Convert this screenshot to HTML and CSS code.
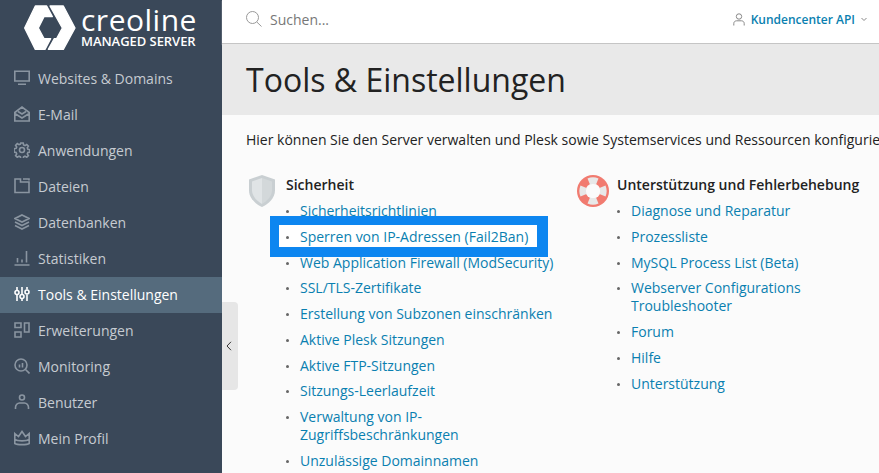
FILE: index.html
```html
<!DOCTYPE html>
<html lang="de">
<head>
<meta charset="utf-8">
<title>Tools &amp; Einstellungen</title>
<link rel="stylesheet" href="styles.css">
</head>
<body>
<div class="shell">
  <aside class="sidebar">
    <div class="brand">
      <svg class="brand-mark" width="60" height="55" viewBox="0 0 180 165"><path d="M46 18H80L97 50H72L55 84 72 116H92L75 148H46L14 84Z"/><path d="M90 18H130L165 84 130 148H85L103 116H110L127 84Z"/></svg>
      <div class="brand-text">
        <span class="brand-name">creoline</span>
        <span class="brand-sub">MANAGED SERVER</span>
      </div>
    </div>
    <nav class="nav">
      <a class="nav-item"><svg class="nav-icon" viewBox="0 0 16 16"><path d="M.8 1.200h14.400v9.800H.8zM4 14.200h8"/></svg>Websites &amp; Domains</a>
      <a class="nav-item"><svg class="nav-icon" viewBox="0 0 16 16"><path d="M.8 6.500 8 1l7.200 5.500v8.500H.8zM.8 7.500l7.200 4.500 7.200-4.500M4 5.500l4 2.500 4-2.500"/></svg>E-Mail</a>
      <a class="nav-item"><svg class="nav-icon" viewBox="0 0 16 16"><circle cx="8" cy="8" r="2.500"/><path d="M6.800 1h2.400l.4 2 1.400.6 1.700-1.100 1.700 1.700-1.100 1.700.6 1.400 2 .4v2.400l-2 .4-.6 1.400 1.100 1.700-1.700 1.700-1.700-1.100-1.400.6-.4 2H6.800l-.4-2-1.400-.6-1.700 1.100-1.700-1.700 1.100-1.700-.6-1.400-2-.4V6.800l2-.4.6-1.400-1.100-1.700 1.700-1.700 1.700 1.100 1.400-.6z"/></svg>Anwendungen</a>
      <a class="nav-item"><svg class="nav-icon" viewBox="0 0 16 16"><path d="M1 1h5.500v3H15v10.500H1zM9 1h6v1.500"/></svg>Dateien</a>
      <a class="nav-item"><svg class="nav-icon" viewBox="0 0 16 16"><path d="M8 1 15 4.500 8 8 1 4.500zM1 8l7 3.500L15 8M1 11.500 8 15l7-3.500"/></svg>Datenbanken</a>
      <a class="nav-item"><svg class="nav-icon" viewBox="0 0 16 16"><path d="M.5 15h15M3.500 12.500V8M8 12.500V9.500M12.500 12.500V1"/></svg>Statistiken</a>
      <a class="nav-item nav-item-active"><svg class="nav-icon" viewBox="0 0 16 16"><path d="M3 1v3M3 9v6M8 1v7M8 12.500V15M13 1v2.500M13 8.500V15"/><circle cx="3" cy="6.500" r="2"/><circle cx="8" cy="10.500" r="2"/><circle cx="13" cy="6" r="2"/></svg>Tools &amp; Einstellungen</a>
      <a class="nav-item"><svg class="nav-icon" viewBox="0 0 16 16"><path d="M1 1h6v4.500H1zM1 10h6v5H1zM10.500 1h4.500v9h-4.500z"/></svg>Erweiterungen</a>
      <a class="nav-item"><svg class="nav-icon" viewBox="0 0 16 16"><circle cx="7" cy="7" r="6"/><path d="M11.500 11.500 15.500 15.500M5.500 9.500V6.500M8.500 9.500V5"/></svg>Monitoring</a>
      <a class="nav-item"><svg class="nav-icon" viewBox="0 0 16 16"><circle cx="8" cy="3.500" r="2.500"/><path d="M1.500 15v-1.500C1.500 11 3.500 9 5.500 9h5c2 0 4 2 4 4.500V15"/></svg>Benutzer</a>
      <a class="nav-item"><svg class="nav-icon" viewBox="0 0 16 16"><path d="M.8 3.500 4.500 6.500 8 1.500l3.500 5 3.700-3v10C13 15 3 15 .8 13.500zM.8 9.500c3 1.800 11.400 1.800 14.400 0"/></svg>Mein Profil</a>
    </nav>
  </aside>
  <div class="main">
    <header class="topbar">
      <div class="search">
        <svg class="search-icon" width="16" height="16" viewBox="0 0 16 16"><circle cx="6.500" cy="6.500" r="6"/><path d="M10.800 11 15.500 15.500"/></svg>
        <span>Suchen...</span>
      </div>
      <div class="account">
        <svg class="account-icon" width="12" height="13" viewBox="0 0 12 13"><circle cx="6" cy="3.500" r="2.700"/><path d="M.8 12.500v-2C.8 8.500 2.500 7.800 3.500 7.800h5c1 0 2.700.7 2.700 2.700v2"/></svg>
        <span class="account-name">Kundencenter API</span>
        <svg class="account-caret" width="6" height="5" viewBox="0 0 6 5"><path d="M.5 1 3 3.500 5.500 1"/></svg>
      </div>
    </header>
    <div class="title-band"><h1>Tools &amp; Einstellungen</h1></div>
    <section class="content">
      <p class="intro">Hier können Sie den Server verwalten und Plesk sowie Systemservices und Ressourcen konfigurieren.</p>
      <div class="columns">
        <div class="group group-security">
          <svg class="group-icon" width="26" height="32" viewBox="0 0 26 32"><path d="M13 0 26 4.500V15.500C26 23 19.500 29 13 32 6.500 29 0 23 0 15.500V4.500Z" fill="#c9cfd2"/><path d="M13 3 3 6.500V15.500C3 21 8 26 13 29Z" fill="#e0e4e6"/><path d="M13 3 23 6.500V15.500C23 21 18 26 13 29Z" fill="#d3d8da"/></svg>
          <div class="group-body">
            <h2>Sicherheit</h2>
            <ul>
              <li><a>Sicherheitsrichtlinien</a></li>
              <li class="item-flagged"><a>Sperren von IP-Adressen (Fail2Ban)</a></li>
              <li><a>Web Application Firewall (ModSecurity)</a></li>
              <li><a>SSL/TLS-Zertifikate</a></li>
              <li><a>Erstellung von Subzonen einschränken</a></li>
              <li><a>Aktive Plesk Sitzungen</a></li>
              <li><a>Aktive FTP-Sitzungen</a></li>
              <li><a>Sitzungs-Leerlaufzeit</a></li>
              <li><a>Verwaltung von IP-<br>Zugriffsbeschränkungen</a></li>
              <li><a>Unzulässige Domainnamen</a></li>
            </ul>
          </div>
        </div>
        <div class="group group-support">
          <svg class="group-icon" width="32" height="32" viewBox="0 0 32 32"><circle cx="16" cy="16" r="16" fill="#f17b70"/><circle cx="16" cy="16" r="7.500" fill="#fbfbfb"/><g fill="#e8e8e8"><path d="M10.500 3.500a14 14 0 0 1 11 0L19 9.500a8 8 0 0 0-6 0z"/><path d="M10.500 28.500a14 14 0 0 0 11 0L19 22.500a8 8 0 0 1-6 0z"/><path d="M3.500 10.500a14 14 0 0 0 0 11L9.500 19a8 8 0 0 1 0-6z"/><path d="M28.500 10.500a14 14 0 0 1 0 11L22.500 19a8 8 0 0 0 0-6z"/></g></svg>
          <div class="group-body">
            <h2>Unterstützung und Fehlerbehebung</h2>
            <ul>
              <li><a>Diagnose und Reparatur</a></li>
              <li><a>Prozessliste</a></li>
              <li><a>MySQL Process List (Beta)</a></li>
              <li><a>Webserver Configurations<br>Troubleshooter</a></li>
              <li><a>Forum</a></li>
              <li><a>Hilfe</a></li>
              <li><a>Unterstützung</a></li>
            </ul>
          </div>
        </div>
      </div>
    </section>
  </div>
  <button class="collapse" type="button"><svg width="6" height="10" viewBox="0 0 6 10"><path d="M5 .8 1 5l4 4.200"/></svg></button>
  <div class="highlight"></div>
</div>
</body>
</html>
```
FILE: styles.css
```css
* { box-sizing: border-box; }
html, body { margin: 0; height: 100%; overflow: hidden; }
body { font-family: "Open Sans", "Noto Sans", sans-serif; font-size: 14px; color: #222; background: #fbfbfb; }
a { text-decoration: none; }
.shell { position: relative; display: flex; width: 879px; height: 473px; overflow: hidden; }

.sidebar { flex: 0 0 222px; background: #3a4859; color: #c9ced4; }
.brand { display: flex; align-items: flex-start; height: 61px; padding-left: 20px; gap: 1px; }
.brand-mark { flex: none; fill: #fff; stroke: #fff; stroke-width: 4; stroke-linejoin: round; }
.brand-text { display: flex; flex-direction: column; color: #fff; padding-top: 5px; }
.brand-name { font-size: 30px; line-height: 30px; letter-spacing: .5px; }
.brand-sub { font-size: 13px; font-weight: 600; line-height: 14px; margin-top: -1px; letter-spacing: -.05px; }

.nav { display: flex; flex-direction: column; }
.nav-item { display: flex; align-items: center; height: 36px; padding: 0 0 2px 14px; gap: 8px; color: #c6cbd1; }
.nav-icon { width: 16px; height: 16px; fill: none; stroke: #8a95a1; stroke-width: 1.600; flex: none; }
.nav-item-active { background: #556b7d; color: #fff; }
.nav-item-active .nav-icon { stroke: #fff; }

.main { flex: 1; min-width: 0; display: flex; flex-direction: column; }
.topbar { flex: none; height: 44px; display: flex; align-items: center; justify-content: space-between; padding: 0 12px 5px 24px; background: #fff; border-bottom: 1px solid #c5c5c5; box-shadow: 0 1px 1px #d5d5d5; }
.search { display: flex; align-items: center; gap: 8px; color: #777; font-size: 14px; }
.search-icon { fill: none; stroke: #999; stroke-width: 1; }
.account { display: flex; align-items: center; color: #0a7fb0; font-size: 12px; font-weight: 600; }
.account-icon { fill: none; stroke: #888; stroke-width: 1; margin-right: 6px; }
.account-caret { fill: none; stroke: #888; stroke-width: 1; margin-left: 6px; }

.title-band { flex: none; height: 71px; padding: 0 24px; background: #e9e9e9; display: flex; align-items: center; }
h1 { margin: 0; font-size: 32px; font-weight: 400; line-height: 40px; color: #222; white-space: nowrap; }

.content { flex: 1; padding: 16px 0 0 24px; background: #fbfbfb; white-space: nowrap; }
.intro { margin: 0 0 27px; line-height: 18px; color: #222; }
.columns { display: flex; }
.group { display: flex; }
.group-security { width: 331px; padding-left: 3px; }
.group-icon { flex: none; margin: -1px 11px 0 0; }
.group-support .group-icon { margin-right: 8px; }
h2 { margin: 0 0 8.400px; font-size: 14px; font-weight: 600; line-height: 18px; color: #222; }
ul { margin: 0; padding: 0; list-style: none; }
li { position: relative; padding-left: 14px; margin-bottom: 7.700px; line-height: 18px; }
li::before { content: ""; position: absolute; left: 0; top: 8px; width: 3px; height: 3px; border-radius: 50%; background: #666; }
li a { color: #0a7fb0; }
.item-flagged { isolation: isolate; }
.item-flagged::after { content: ""; position: absolute; z-index: -1; left: -7px; top: -3px; width: 258px; height: 22px; background: #fff; }

.collapse { position: absolute; left: 222px; top: 302px; width: 16px; height: 88px; padding: 0 2px 0 0; border: 0; border-radius: 0 4px 4px 0; background: #e6e6e6; display: flex; align-items: center; justify-content: center; }
.collapse svg { fill: none; stroke: #333; stroke-width: 1; }
.highlight { position: absolute; left: 270px; top: 216px; width: 278px; height: 41px; border: solid #0d86f0; border-width: 9px 11px 10px 9px; }
```
